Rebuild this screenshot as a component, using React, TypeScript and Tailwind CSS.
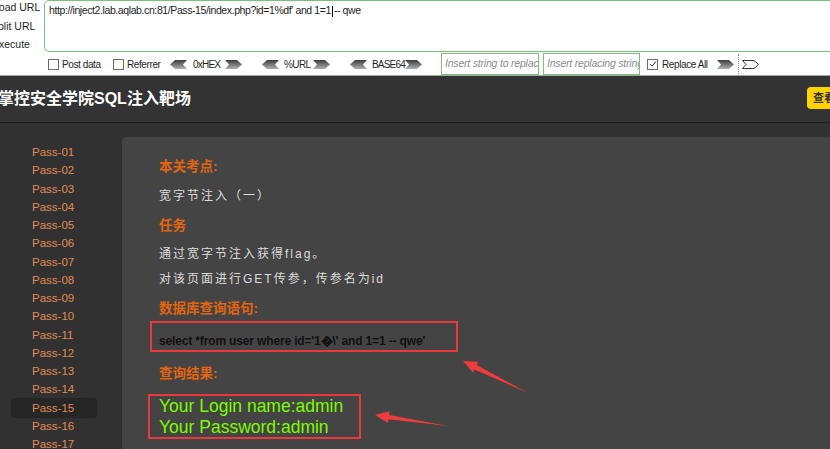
import React from 'react';

const passes = Array.from({ length: 17 }, (_, i) => `Pass-${String(i + 1).padStart(2, '0')}`);

const ArrowL = () => (
  <svg width="17" height="9" viewBox="0 0 17 9" className="block">
    <defs>
      <linearGradient id="ga" x1="0" y1="0" x2="0" y2="1">
        <stop offset="0" stopColor="#3c3c3c" />
        <stop offset="1" stopColor="#b0b0b0" />
      </linearGradient>
    </defs>
    <polygon points="0,4.5 5,0 17,0 13,4.5 17,9 5,9" fill="url(#ga)" />
  </svg>
);

const ArrowR = ({ outline }: { outline?: boolean }) => (
  <svg width="17" height="9" viewBox="0 0 17 9" className="block">
    <defs>
      <linearGradient id="gb" x1="0" y1="0" x2="0" y2="1">
        <stop offset="0" stopColor="#3c3c3c" />
        <stop offset="1" stopColor="#b0b0b0" />
      </linearGradient>
    </defs>
    {outline ? (
      <polygon points="16.5,4.5 12,0.5 0.5,0.5 4,4.5 0.5,8.5 12,8.5" fill="#fff" stroke="#333" strokeWidth="1" />
    ) : (
      <polygon points="17,4.5 12,0 0,0 4,4.5 0,9 12,9" fill="url(#gb)" />
    )}
  </svg>
);

const Check = ({ checked }: { checked?: boolean }) => (
  <span className="w-[11px] h-[11px] border border-[#6d6d6d] bg-white flex items-center justify-center">
    {checked && (
      <svg width="8" height="8" viewBox="0 0 8 8">
        <path d="M1 4.2 L3 6.2 L7 1.5" fill="none" stroke="#333" strokeWidth="1" />
      </svg>
    )}
  </span>
);

export default function App() {
  return (
    <div className="relative w-[830px] h-[449px] overflow-hidden bg-[#313131] font-['Liberation_Sans','Noto_Sans_CJK_SC',sans-serif]">
      {/* hackbar */}
      <div className="flex h-[75px] bg-white text-[10.5px] text-[#1e1e1e]">
        <div className="w-[44px] shrink-0 overflow-hidden">
          <div className="-ml-[7px] -mt-[2px] flex flex-col">
            <span className="h-[18.5px] leading-[18.5px] whitespace-nowrap">Load URL</span>
            <span className="h-[18.5px] leading-[18.5px] whitespace-nowrap -ml-[2px]">Split URL</span>
            <span className="h-[18.5px] leading-[18.5px] whitespace-nowrap -ml-[1px]">Execute</span>
          </div>
        </div>
        <div className="flex-1 flex flex-col min-w-0">
          <div className="h-[52px] -mr-[6px] border border-[#77c377] rounded-[5px] px-[4px] pt-[2px]">
            <span className="whitespace-nowrap text-[10.5px] tracking-[-0.4px]">
              http://inject2.lab.aqlab.cn:81/Pass-15/index.php?id=1%df' and 1=1
              <span className="inline-block w-px h-[11px] bg-black align-middle mx-[1px]"></span>-- qwe
            </span>
          </div>
          <div className="flex-1 flex items-center whitespace-nowrap text-[10px] tracking-[-0.4px] pt-px">
            <span className="shrink-0 ml-[4px]"><Check /></span>
            <span className="shrink-0 ml-[3px] w-[39px]">Post data</span>
            <span className="shrink-0 ml-[12px]"><Check /></span>
            <span className="shrink-0 ml-[3px] w-[34px]">Referrer</span>
            <span className="shrink-0 ml-[9px]"><ArrowL /></span>
            <span className="shrink-0 ml-[6px] w-[29px] tracking-[-0.8px]">0xHEX</span>
            <span className="shrink-0 ml-[3px]"><ArrowR /></span>
            <span className="shrink-0 ml-[20px]"><ArrowL /></span>
            <span className="shrink-0 ml-[5px] w-[25px] tracking-[-0.6px]">%URL</span>
            <span className="shrink-0 ml-[4px]"><ArrowR /></span>
            <span className="shrink-0 ml-[20px]"><ArrowL /></span>
            <span className="shrink-0 ml-[5px] w-[31px] tracking-[-0.8px]">BASE64</span>
            <span className="shrink-0 ml-[2px]"><ArrowR /></span>
            <div className="shrink-0 self-end ml-[19px] h-[22px] w-[98px] border border-[#77c377] flex items-center px-[3px] overflow-hidden italic text-[10.5px] tracking-[-0.2px] text-[#8c8c8c]">
              Insert string to replace
            </div>
            <div className="shrink-0 self-end ml-[4px] h-[22px] w-[97px] border border-[#77c377] flex items-center px-[3px] overflow-hidden italic text-[10.5px] tracking-[-0.2px] text-[#8c8c8c]">
              Insert replacing string
            </div>
            <span className="shrink-0 ml-[7px]"><Check checked /></span>
            <span className="shrink-0 ml-[4px] w-[47px]">Replace All</span>
            <span className="shrink-0 ml-[8px]"><ArrowR /></span>
            <span className="shrink-0 ml-[4px] h-[20px] border-l border-dotted border-[#888]"></span>
            <span className="shrink-0 ml-[3px]"><ArrowR outline /></span>
          </div>
        </div>
      </div>
      <div className="h-px bg-[#a3a3a3]"></div>

      {/* header */}
      <div className="h-[47px] bg-[#333333] border-b border-[#1b1b1b] flex items-center justify-between">
        <h1 className="-ml-[2px] text-white font-bold text-[16px] whitespace-nowrap">掌控安全学院SQL注入靶场</h1>
        <div className="mr-[-12px] mt-[-2px] h-[22px] w-[35px] rounded-[4px] bg-[#ffd200] text-[#333] text-[11px] font-bold pl-[6px] leading-[22px]">查看</div>
      </div>

      {/* body */}
      <div className="flex h-full">
        <div className="w-[122px] shrink-0 pt-[20px] flex flex-col">
          {passes.map((p) =>
            p === 'Pass-15' ? (
              <div key={p} className="ml-[11px] w-[86px] h-[20px] -my-[0.875px] rounded-[4px] bg-[#262626] pl-[21px] leading-[20px] text-[11.5px] text-[#e08c52]">
                {p}
              </div>
            ) : (
              <div key={p} className="pl-[32px] h-[18.25px] leading-[18.25px] text-[11.5px] text-[#e08c52]">
                {p}
              </div>
            )
          )}
        </div>
        <div className="flex-1 mt-[14px] bg-[#444444] rounded-tl-[5px] pl-[37px] pt-[20px]">
          <div className="h-[20px] leading-[20px] text-[13.5px] font-bold text-[#e3650f]">本关考点:</div>
          <div className="mt-[9px] h-[20px] leading-[20px] text-[12px] tracking-[2px] text-[#dcdcdc]">宽字节注入（一）</div>
          <div className="mt-[10px] h-[20px] leading-[20px] text-[13.5px] font-bold text-[#e3650f]">任务</div>
          <div className="mt-[8px] h-[20px] leading-[20px] text-[12px] tracking-[2px] text-[#dcdcdc]">通过宽字节注入获得flag。</div>
          <div className="mt-[5px] h-[20px] leading-[20px] text-[12px] tracking-[2px] text-[#dcdcdc]">对该页面进行GET传参，传参名为id</div>
          <div className="mt-[10px] h-[20px] leading-[20px] text-[13.5px] font-bold text-[#e3650f]">数据库查询语句:</div>
          <div className="mt-[2px] -ml-[9px] w-[308px] h-[31px] border-2 border-[#e8393d] pl-[7px] pt-[10px] leading-[16px] text-[12px] tracking-[-0.15px] font-bold text-[#111] whitespace-nowrap">
            select *from user where id='1�\' and 1=1 -- qwe'
          </div>
          <div className="mt-[12px] h-[20px] leading-[20px] text-[13.5px] font-bold text-[#e3650f]">查询结果:</div>
          <div className="mt-[10px] -ml-[11px] w-[213px] h-[45px] border-2 border-[#e8393d] pl-[9px] text-[17.5px] leading-[21px] text-[#7cfc00] whitespace-nowrap">
            <div>Your Login name:admin</div>
            <div>Your Password:admin</div>
          </div>
        </div>
      </div>

      {/* annotation arrows */}
      <svg className="absolute inset-0 pointer-events-none" width="830" height="449">
        <polygon points="463,361 478.2,361.8 476.7,365 528,393 474.5,369.4 472.9,372.6" fill="#ef3b3b" />
        <polygon points="375,415 389.7,411.2 389.1,414.9 448,426 388.5,419.3 387.9,423" fill="#ef3b3b" />
      </svg>
    </div>
  );
}
